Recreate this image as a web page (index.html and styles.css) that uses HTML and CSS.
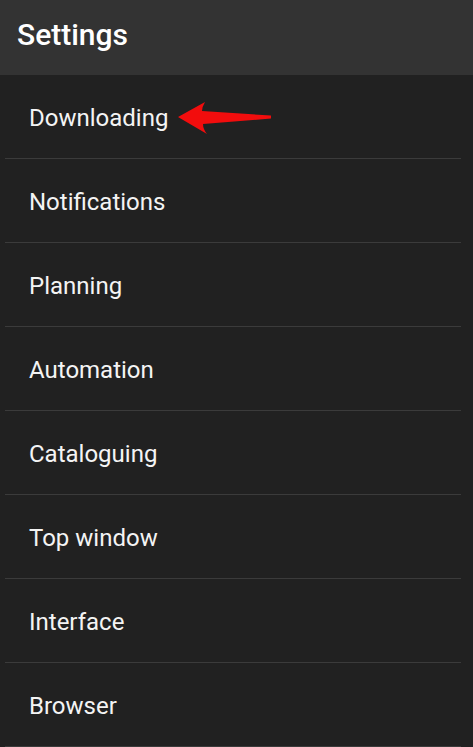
FILE: index.html
```html
<!DOCTYPE html>
<html lang="en">
<head>
  <meta charset="UTF-8" />
  <meta name="viewport" content="width=device-width, initial-scale=1.0"/>
  <title>Settings</title>
  <link rel="stylesheet" href="styles.css">
</head>
<body>
  <div class="toolbar">
    <h1>Settings</h1>
  </div>

  <ul class="settings-list">
    <li class="item">
      <span>Downloading</span>
      <svg class="pointer" width="98" height="36" viewBox="0 0 98 36">
        <path d="M2 17 L29 2 Q26 7 26 11 L95 15.5 L95 18.5 L27 24 Q27 29 31 34 Z" fill="#f20d0d"/>
      </svg>
    </li>
    <li class="item"><span>Notifications</span></li>
    <li class="item"><span>Planning</span></li>
    <li class="item"><span>Automation</span></li>
    <li class="item"><span>Cataloguing</span></li>
    <li class="item"><span>Top window</span></li>
    <li class="item"><span>Interface</span></li>
    <li class="item"><span>Browser</span></li>
  </ul>
</body>
</html>
```

FILE: styles.css
```css
body {
  margin: 0;
  background: #212121;
  font-family: Roboto, "Liberation Sans", sans-serif;
  color: #fff;
}

.toolbar {
  background: #333333;
  height: 75px;
  display: flex;
  align-items: center;
  padding: 0 17px;
}

.toolbar h1 {
  margin: 0 0 7px;
  font-size: 30px;
  font-weight: 500;
}

.settings-list {
  list-style: none;
  margin: 0;
  padding: 0 12px 0 5px;
}

.item {
  position: relative;
  height: 83px;
  display: flex;
  align-items: center;
  padding-left: 24px;
  font-size: 24px;
  color: #f4f4f4;
  border-bottom: 1px solid #3b3b3b;
}

.item span {
  margin-top: 3px;
}

.pointer {
  position: absolute;
  left: 171px;
  top: 25px;
}
```
